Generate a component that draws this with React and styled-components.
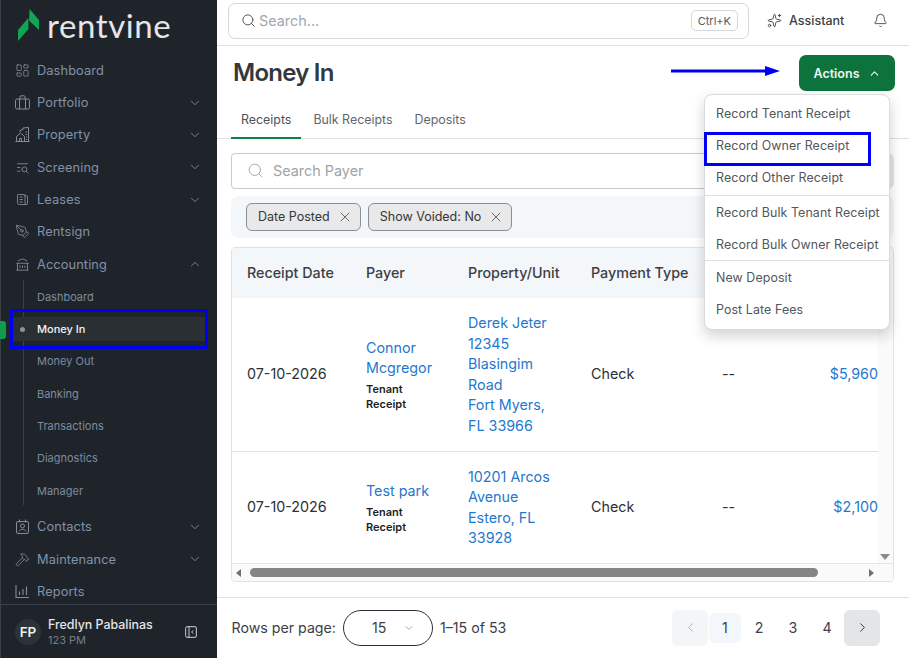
import React from 'react';
import styled, { createGlobalStyle } from 'styled-components';
import {
  Search,
  Bell,
  ChevronDown,
  ChevronUp,
  ChevronLeft,
  ChevronRight,
  X,
  LayoutDashboard,
  PenTool,
  Hammer,
  Sparkles,
} from 'lucide-react';
import {
  TbListSearch,
  TbNews,
  TbBuildingBank,
  TbLayoutSidebarLeftCollapse,
} from 'react-icons/tb';

const GlobalStyle = createGlobalStyle`
  html, body {
    margin: 0;
    padding: 0;
    background: #fff;
    font-family: Inter, "Liberation Sans", sans-serif;
  }
  * { box-sizing: border-box; }
`;

// sidebar
const Page = styled.div`
  display: flex;
  width: 909px;
  height: 658px;
  overflow: hidden;
`;
const Sidebar = styled.aside`
  width: 217px;
  flex: none;
  display: flex;
  flex-direction: column;
  background: #1f242a;
  border-left: 1px solid #3b4148;
  position: relative;
`;
const ActiveTab = styled.span`
  position: absolute;
  left: -1px;
  top: 321px;
  width: 6px;
  height: 18px;
  border-radius: 0 3px 3px 0;
  background: #0e9c4f;
`;
const LogoRow = styled.div`
  height: 54px;
  flex: none;
  display: flex;
  align-items: center;
  gap: 7px;
  padding: 0 0 4px 17px;
`;
const LogoText = styled.span`
  font-family: Lato, sans-serif;
  font-size: 33px;
  font-weight: 400;
  letter-spacing: 0.6px;
  color: #e4e6e9;
  line-height: 1;
`;
const Nav = styled.nav`
  flex: 1;
  min-height: 0;
  overflow: hidden;
`;
const NavRow = styled.div`
  height: 32.35px;
  display: flex;
  align-items: center;
  padding: 0 15px 0 14px;
  gap: 7px;
  color: #8192a8;
  font-size: 12.8px;
  letter-spacing: 0.1px;
  svg.lead {
    color: #868d95;
    flex: none;
  }
  svg.chev {
    margin-left: auto;
    color: #868d95;
  }
`;
const SubList = styled.div`
  position: relative;
  padding-bottom: 4px;
  &::before {
    content: '';
    position: absolute;
    left: 22px;
    top: 0;
    bottom: 6px;
    width: 1px;
    background: #3b4148;
  }
`;
const SubRow = styled.div`
  height: 32.35px;
  display: flex;
  align-items: center;
  padding-left: 36px;
  font-size: 11px;
  color: ${(p) => (p.$active ? '#f2f4f6' : '#7c8b9e')};
  font-weight: ${(p) => (p.$active ? 500 : 400)};
  position: relative;
  ${(p) => p.$active && `
    background: #2a2f34;
    margin: 4px 12px 4px 12px;
    height: 24.35px;
    padding-left: 24px;
    z-index: 1;
  `}
`;
const Dot = styled.span`
  position: absolute;
  left: 7px;
  top: 10px;
  width: 5px;
  height: 5px;
  border-radius: 50%;
  background: #8d939a;
`;
const SideMark = styled.span`
  position: absolute;
  left: -3px;
  top: -8px;
  width: 198px;
  height: 40px;
  border: 3px solid #0000f5;
`;
const UserBar = styled.div`
  height: 54px;
  flex: none;
  border-top: 1px solid #3b4148;
  display: flex;
  align-items: center;
  padding: 0 18px 0 14px;
`;
const Avatar = styled.div`
  width: 26px;
  height: 26px;
  border-radius: 50%;
  background: #2c3338;
  color: #eceef0;
  font-size: 13.5px;
  font-weight: 600;
  display: flex;
  align-items: center;
  justify-content: center;
  flex: none;
`;
const UserInfo = styled.div`
  margin-left: 7px;
  flex: 1;
`;
const UserName = styled.div`
  font-size: 12.4px;
  font-weight: 500;
  color: #e3e5e8;
  line-height: 16px;
`;
const UserSub = styled.div`
  font-size: 11px;
  color: #777e86;
  line-height: 14px;
`;

// main column
const Main = styled.main`
  flex: 1;
  min-width: 0;
  display: flex;
  flex-direction: column;
`;
const TopBar = styled.header`
  height: 46px;
  flex: none;
  display: flex;
  align-items: center;
  padding: 0 21px 4px 11px;
  border-bottom: 1px solid #dedfe1;
`;
const GlobalSearch = styled.div`
  width: 521px;
  height: 36px;
  border: 1px solid #d5d7da;
  border-radius: 7px;
  display: flex;
  align-items: center;
  padding: 0 10px 0 12px;
  gap: 3px;
  color: #a3a7ac;
  font-size: 14.4px;
  svg { color: #51565c; }
`;
const Kbd = styled.span`
  margin-left: auto;
  height: 21px;
  padding: 0 6px;
  border: 1px solid #d5d7da;
  border-radius: 5px;
  font-size: 11px;
  color: #55595e;
  display: flex;
  align-items: center;
`;
const Assistant = styled.div`
  margin-left: 18px;
  display: flex;
  align-items: center;
  gap: 7px;
  font-size: 12.5px;
  font-weight: 500;
  color: #3a3f45;
`;
const BellWrap = styled.div`
  margin-left: auto;
  display: flex;
  color: #3a3f45;
`;
const TitleRow = styled.div`
  height: 52px;
  flex: none;
  display: flex;
  align-items: center;
  padding: 0 14px 0 16px;
`;
const Title = styled.h1`
  margin: 0;
  font-size: 24px;
  font-weight: 600;
  letter-spacing: -0.75px;
  color: #34383d;
`;
const ArrowMark = styled.svg`
  margin-left: auto;
  margin-right: 19px;
  margin-top: -3px;
`;
const ActionsWrap = styled.div`
  position: relative;
  z-index: 3;
  margin-top: 2px;
`;
const ActionsButton = styled.button`
  width: 96px;
  height: 36px;
  border: 0;
  border-radius: 7px;
  background: #0c733d;
  color: #eef5f0;
  font-family: inherit;
  font-size: 12.5px;
  font-weight: 600;
  display: flex;
  align-items: center;
  justify-content: center;
  gap: 8px;
`;
const Menu = styled.div`
  position: absolute;
  right: 5px;
  top: 39px;
  width: 186px;
  background: #fff;
  border: 1px solid #d9dbde;
  border-radius: 8px;
  box-shadow: 0 6px 14px rgba(0, 0, 0, 0.18);
  padding: 2px 0 4px;
`;
const MenuItem = styled.div`
  height: 32px;
  display: flex;
  align-items: center;
  padding-left: 11px;
  font-size: 12.4px;
  letter-spacing: 0.1px;
  color: #52565c;
  white-space: nowrap;
  position: relative;
`;
const MenuLine = styled.div`
  height: 1px;
  background: #dcdee0;
  margin-top: ${(p) => p.$before}px;
`;
const MenuMark = styled.span`
  position: absolute;
  left: -1px;
  top: 3px;
  width: 167px;
  height: 34px;
  border: 3px solid #0000f5;
`;
const Tabs = styled.div`
  height: 41px;
  flex: none;
  display: flex;
  gap: 2px;
  padding-left: 14px;
  border-bottom: 1px solid #dedfe1;
`;
const Tab = styled.div`
  padding: 14px 10px 0;
  font-size: 12.4px;
  color: ${(p) => (p.$active ? '#4d5157' : '#62666c')};
  border-bottom: 2px solid ${(p) => (p.$active ? '#0c8443' : 'transparent')};
  margin-bottom: -1px;
`;
const Content = styled.div`
  flex: 1;
  min-height: 0;
  padding: 14px 15px 0 14px;
  display: flex;
  flex-direction: column;
`;
const SearchRow = styled.div`
  display: flex;
  height: 36px;
  flex: none;
  gap: 8px;
`;
const PayerSearch = styled.div`
  flex: 1;
  border: 1px solid #c8cacd;
  border-radius: 4px;
  display: flex;
  align-items: center;
  gap: 9px;
  padding: 0 0 1px 15px;
  color: #a0a4a9;
  font-size: 14.4px;
  svg { color: #a0a4a9; }
`;
const GreyButton = styled.div`
  width: 36px;
  border-radius: 6px;
  background: #e3e5e7;
`;
const FilterBar = styled.div`
  height: 42px;
  flex: none;
  margin-top: 7px;
  border-radius: 7px;
  background: #f4f7fa;
  display: flex;
  align-items: center;
  gap: 7px;
  padding-left: 15px;
`;
const Chip = styled.div`
  height: 28px;
  border: 1px solid #8c8f92;
  border-radius: 6px;
  background: #e9e9e9;
  display: flex;
  align-items: center;
  gap: 7px;
  padding: 0 7px 2px 11px;
  font-size: 12.5px;
  color: #33373b;
  svg { color: #3a3e42; margin-top: 2px; }
`;
const TablePanel = styled.div`
  flex: none;
  height: 335px;
  margin-top: 9px;
  border: 1px solid #dfe1e3;
  border-radius: 4px;
  display: grid;
  grid-template-columns: 1fr 15px;
  grid-template-rows: 1fr 18px;
  overflow: hidden;
`;
const TableClip = styled.div`
  overflow: hidden;
  min-width: 0;
`;
const Table = styled.table`
  width: 647px;
  table-layout: fixed;
  border-collapse: collapse;
  font-size: 14.3px;
  line-height: 20.6px;
  color: #2d3135;
`;
const Th = styled.th`
  height: 50px;
  padding: 0 0 0 15px;
  text-align: left;
  font-weight: 500;
  background: #f4f7fa;
  color: #3c4046;
  white-space: nowrap;
`;
const Td = styled.td`
  padding: 15px 15px 14px;
  vertical-align: middle;
  border-bottom: 1px solid #dfe1e3;
  text-align: ${(p) => (p.$right ? 'right' : 'left')};
  ${(p) => p.$right && 'padding-right: 1px;'}
`;
const Linkish = styled.div`
  color: #1f78cf;
`;
const Kind = styled.div`
  font-size: 11px;
  line-height: 15px;
  font-weight: 600;
  color: #1c1f22;
  margin-top: 3px;
`;
const VScroll = styled.div`
  background: #fafafa;
  position: relative;
`;
const VThumb = styled.div`
  width: 9px;
  height: 44px;
  margin: 20px 0 0 3px;
  border-radius: 5px;
  background: #858585;
`;
const ArrowDown = styled.span`
  position: absolute;
  left: 2px;
  bottom: 3px;
  border-left: 5px solid transparent;
  border-right: 5px solid transparent;
  border-top: 6px solid #8a8a8a;
`;
const HScroll = styled.div`
  grid-column: 1 / 3;
  background: #fafafa;
  border-top: 1px solid #e4e5e7;
  display: flex;
  align-items: center;
  padding: 0 19px 0 4px;
`;
const HThumb = styled.div`
  width: 568px;
  height: 9px;
  margin-left: 9px;
  border-radius: 5px;
  background: #858585;
`;
const ArrowH = styled.span`
  border-top: 4px solid transparent;
  border-bottom: 4px solid transparent;
  ${(p) => (p.$right
    ? 'border-left: 5px solid #6f6f6f; margin-left: auto;'
    : 'border-right: 5px solid #6f6f6f;')}
`;
const Footer = styled.footer`
  margin-top: 14px;
  height: 61px;
  flex: none;
  border-top: 1px solid #dedfe1;
  display: flex;
  align-items: center;
  padding: 0 29px 1px 14.5px;
  font-size: 14.2px;
  color: #3c4046;
`;
const RowsSelect = styled.div`
  width: 90px;
  height: 36px;
  margin: 0 7px;
  border: 1px solid #2b2f33;
  border-radius: 18px;
  display: flex;
  align-items: center;
  padding-left: 28px;
  gap: 17px;
  svg { color: #8a8e93; }
`;
const Pager = styled.div`
  margin-left: auto;
  display: flex;
  align-items: center;
  gap: 2px;
`;
const PageArrow = styled.div`
  width: 36px;
  height: 36px;
  border-radius: 6px;
  background: ${(p) => (p.$disabled ? '#f3f5f6' : '#e3e5e7')};
  color: ${(p) => (p.$disabled ? '#a8acb0' : '#2d3135')};
  display: flex;
  align-items: center;
  justify-content: center;
  margin: ${(p) => (p.$disabled ? '0 -1px 0 0' : '0 0 0 -1px')};
`;
const PageNum = styled.div`
  width: 32px;
  height: 30px;
  border-radius: 6px;
  background: ${(p) => (p.$active ? '#f3f7fb' : 'transparent')};
  display: flex;
  align-items: center;
  justify-content: center;
`;

// nav icons the packages don't have in this shape
const SuitcaseIcon = () => (
  <svg className="lead" width="15" height="15" viewBox="0 0 15 15" fill="none" stroke="currentColor" strokeWidth="1">
    <rect x="0.5" y="4" width="14" height="10" rx="1.5" />
    <path d="M5 4V1.800a1 1 0 0 1 1-1h3a1 1 0 0 1 1 1V4M4.500 4v10M10.500 4v10" />
  </svg>
);
const PropertyIcon = () => (
  <svg className="lead" width="15" height="15" viewBox="0 0 15 15" fill="none" stroke="currentColor" strokeWidth="1">
    <path d="M0.500 14.500h14M1.500 14.500V9.500L5.500 6l4 3.500v5M4.500 14.500v-3h2v3" />
    <path d="M5 5V3.500l3-1V1l5.500-.5v14M10.500 5h1.500M10.500 7.500h1.500M11 10h1M11 12.500h1" />
  </svg>
);
const ContactIcon = () => (
  <svg className="lead" width="15" height="15" viewBox="0 0 15 15" fill="none" stroke="currentColor" strokeWidth="1">
    <rect x="1.500" y="2.500" width="12" height="12" rx="1.500" />
    <circle cx="7.500" cy="7" r="2" />
    <path d="M4 12.500c.5-1.500 2-2 3.500-2s3 .5 3.500 2M4.500.5v3M10.500.5v3" />
  </svg>
);
const ReportsIcon = () => (
  <svg className="lead" width="15" height="15" viewBox="0 0 15 15" fill="none" stroke="currentColor" strokeWidth="1.100">
    <path d="M1 1v12.500h13M4.500 11V7.500M8 11V5M11.500 11V2.500" />
  </svg>
);
const LogoMark = () => (
  <svg width="22" height="33" viewBox="19 10 22 33" fill="#0fa553">
    <polygon points="30.600,10 40,21 40,31 30,21.500" />
    <polygon points="29.300,19 19,31 19,42 29.500,30" />
  </svg>
);

const NAV_TOP = [
  { label: 'Dashboard', icon: <LayoutDashboard className="lead" size={15} strokeWidth={1.3} /> },
  { label: 'Portfolio', icon: <SuitcaseIcon />, chev: true },
  { label: 'Property', icon: <PropertyIcon />, chev: true },
  { label: 'Screening', icon: <TbListSearch className="lead" size={15} strokeWidth={1.4} />, chev: true },
  { label: 'Leases', icon: <TbNews className="lead" size={15} strokeWidth={1.4} />, chev: true },
  { label: 'Rentsign', icon: <PenTool className="lead" size={15} strokeWidth={1.3} /> },
];
const NAV_SUB = ['Dashboard', 'Money In', 'Money Out', 'Banking', 'Transactions', 'Diagnostics', 'Manager'];
const NAV_BOTTOM = [
  { label: 'Contacts', icon: <ContactIcon />, chev: true },
  { label: 'Maintenance', icon: <Hammer className="lead" size={15} strokeWidth={1.3} />, chev: true },
  { label: 'Reports', icon: <ReportsIcon /> },
];

function NavItem({ item }) {
  return (
    <NavRow>
      {item.icon}
      {item.label}
      {item.chev && <ChevronDown className="chev" size={14} strokeWidth={1.5} />}
    </NavRow>
  );
}

function App() {
  return (
    <Page>
      <GlobalStyle />
      <Sidebar>
        <ActiveTab />
        <LogoRow>
          <LogoMark />
          <LogoText>rentvine</LogoText>
        </LogoRow>
        <Nav>
          {NAV_TOP.map((item) => <NavItem key={item.label} item={item} />)}
          <NavRow>
            <TbBuildingBank className="lead" size={15} strokeWidth={1.4} />
            Accounting
            <ChevronUp className="chev" size={14} strokeWidth={1.5} />
          </NavRow>
          <SubList>
            {NAV_SUB.map((label) => (
              <SubRow key={label} $active={label === 'Money In'}>
                {label === 'Money In' && <Dot />}
                {label}
                {label === 'Money In' && <SideMark />}
              </SubRow>
            ))}
          </SubList>
          {NAV_BOTTOM.map((item) => <NavItem key={item.label} item={item} />)}
        </Nav>
        <UserBar>
          <Avatar>FP</Avatar>
          <UserInfo>
            <UserName>Fredlyn Pabalinas</UserName>
            <UserSub>123 PM</UserSub>
          </UserInfo>
          <TbLayoutSidebarLeftCollapse size={16} color="#d5d8db" strokeWidth={1.4} />
        </UserBar>
      </Sidebar>

      <Main>
        <TopBar>
          <GlobalSearch>
            <Search size={15} strokeWidth={1.6} />
            Search...
            <Kbd>Ctrl+K</Kbd>
          </GlobalSearch>
          <Assistant>
            <Sparkles size={15} strokeWidth={1.4} />
            Assistant
          </Assistant>
          <BellWrap>
            <Bell size={15} strokeWidth={1.4} />
          </BellWrap>
        </TopBar>

        <TitleRow>
          <Title>Money In</Title>
          <ArrowMark width="109" height="12" viewBox="0 0 109 12">
            <rect x="0" y="4.500" width="96" height="3" fill="#0000f5" />
            <polygon points="94,1 109,6 94,11" fill="#0000f5" />
          </ArrowMark>
          <ActionsWrap>
            <ActionsButton>
              Actions
              <ChevronUp size={13} strokeWidth={2} />
            </ActionsButton>
            <Menu>
              <MenuItem>Record Tenant Receipt</MenuItem>
              <MenuItem>
                Record Owner Receipt
                <MenuMark />
              </MenuItem>
              <MenuItem>Record Other Receipt</MenuItem>
              <MenuLine $before={2} />
              <MenuItem>Record Bulk Tenant Receipt</MenuItem>
              <MenuItem>Record Bulk Owner Receipt</MenuItem>
              <MenuLine $before={0} />
              <MenuItem>New Deposit</MenuItem>
              <MenuItem>Post Late Fees</MenuItem>
            </Menu>
          </ActionsWrap>
        </TitleRow>

        <Tabs>
          <Tab $active>Receipts</Tab>
          <Tab>Bulk Receipts</Tab>
          <Tab>Deposits</Tab>
        </Tabs>

        <Content>
          <SearchRow>
            <PayerSearch>
              <Search size={17} strokeWidth={1.3} />
              Search Payer
            </PayerSearch>
            <GreyButton />
          </SearchRow>
          <FilterBar>
            <Chip>Date Posted <X size={16} strokeWidth={1.1} /></Chip>
            <Chip>Show Voided: No <X size={16} strokeWidth={1.1} /></Chip>
          </FilterBar>
          <TablePanel>
            <TableClip>
              <Table>
                <colgroup>
                  <col width="119" />
                  <col width="102" />
                  <col width="123" />
                  <col width="131" />
                  <col width="86" />
                  <col width="86" />
                </colgroup>
                <thead>
                  <tr>
                    <Th>Receipt Date</Th>
                    <Th>Payer</Th>
                    <Th>Property/Unit</Th>
                    <Th>Payment Type</Th>
                    <Th />
                    <Th />
                  </tr>
                </thead>
                <tbody>
                  <tr>
                    <Td>07-10-2026</Td>
                    <Td>
                      <Linkish>Connor Mcgregor</Linkish>
                      <Kind>Tenant Receipt</Kind>
                    </Td>
                    <Td>
                      <Linkish>Derek Jeter 12345 Blasingim Road<br />Fort Myers, FL 33966</Linkish>
                    </Td>
                    <Td>Check</Td>
                    <Td>--</Td>
                    <Td $right><Linkish>$5,960</Linkish></Td>
                  </tr>
                  <tr>
                    <Td>07-10-2026</Td>
                    <Td>
                      <Linkish>Test park</Linkish>
                      <Kind>Tenant Receipt</Kind>
                    </Td>
                    <Td>
                      <Linkish>10201 Arcos Avenue Estero, FL 33928</Linkish>
                    </Td>
                    <Td>Check</Td>
                    <Td>--</Td>
                    <Td $right><Linkish>$2,100</Linkish></Td>
                  </tr>
                </tbody>
              </Table>
            </TableClip>
            <VScroll>
              <VThumb />
              <ArrowDown />
            </VScroll>
            <HScroll>
              <ArrowH />
              <HThumb />
              <ArrowH $right />
            </HScroll>
          </TablePanel>
        </Content>

        <Footer>
          Rows per page:
          <RowsSelect>
            15
            <ChevronDown size={12} strokeWidth={1.5} />
          </RowsSelect>
          1–15 of 53
          <Pager>
            <PageArrow $disabled><ChevronLeft size={15} strokeWidth={1.5} /></PageArrow>
            <PageNum $active>1</PageNum>
            <PageNum>2</PageNum>
            <PageNum>3</PageNum>
            <PageNum>4</PageNum>
            <PageArrow><ChevronRight size={15} strokeWidth={1.5} /></PageArrow>
          </Pager>
        </Footer>
      </Main>
    </Page>
  );
}

export default App;
